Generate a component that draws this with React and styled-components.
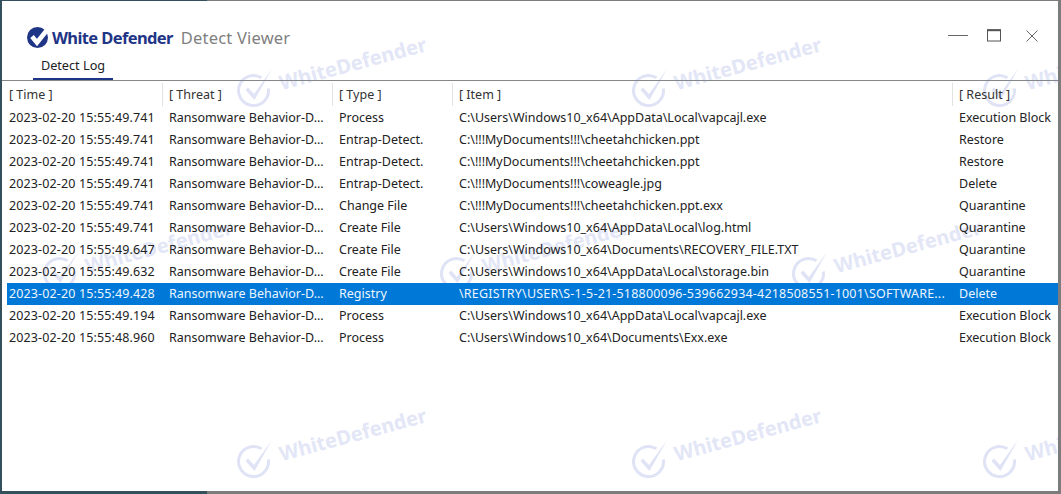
import React from 'react';
import styled, { createGlobalStyle } from 'styled-components';

const Global = createGlobalStyle`
  html, body { margin: 0; padding: 0; background: #fff; }
  #root { width: 1061px; height: 494px; overflow: hidden; }
`;

const COLS = '155px 170px 120px 500px 105px';
const FONT = '"Noto Sans", "Noto Sans CJK KR", sans-serif';

const Frame = styled.div`
  box-sizing: border-box;
  position: relative;
  width: 1061px;
  height: 494px;
  background: #fff;
  overflow: hidden;
  border-style: solid;
  border-width: 1px 3px 3px 2px;
  border-image: linear-gradient(to right, #34505c 207px, #7c7c7c 207px) 1;
  font-family: ${FONT};
  color: #222;
`;

const Content = styled.div`
  position: relative;
  display: flex;
  flex-direction: column;
  height: 100%;
`;

const TitleBar = styled.header`
  display: flex;
  align-items: center;
  height: 49px;
  padding: 1px 0 0 24px;
  box-sizing: border-box;
`;

const Brand = styled.div`
  display: flex;
  align-items: center;
  gap: 1px;
  margin-top: 22px;
`;

const BrandName = styled.span`
  font-size: 16.5px;
  font-weight: 700;
  letter-spacing: -0.62px;
  color: #1f3586;
`;

const AppName = styled.span`
  margin-left: 8px;
  margin-top: 22px;
  font-size: 16.5px;
  letter-spacing: 0.2px;
  color: #808080;
`;

const WindowButtons = styled.div`
  margin-left: auto;
  margin-top: 19px;
  display: flex;
  align-items: center;
  gap: 19px;
  padding-right: 20px;
  svg:last-child { margin-left: 6px; }
`;

const TabBar = styled.nav`
  display: flex;
  height: 30px;
  padding-left: 31px;
  border-bottom: 1px solid #85888b;
  box-sizing: content-box;
`;

const Tab = styled.div`
  box-sizing: border-box;
  width: 80px;
  height: 30px;
  border-bottom: 2px solid #1f3586;
  font-size: 12.7px;
  line-height: 30px;
  text-align: center;
  color: #222;
`;

const Table = styled.section`
  display: flex;
  flex-direction: column;
  padding-left: 5px;
`;

const HeaderRow = styled.div`
  display: grid;
  grid-template-columns: ${COLS};
  height: 26px;
  padding: 2px 0 1px;
  box-sizing: border-box;
`;

const HeaderCell = styled.div`
  font-size: 12.5px;
  line-height: 23px;
  padding-left: ${p => (p.$first ? '2px' : '6px')};
  border-left: ${p => (p.$first ? 'none' : '1px solid #e2e2e2')};
  color: #333;
`;

const Row = styled.div`
  display: grid;
  grid-template-columns: ${COLS};
  height: 22px;
  background: ${p => (p.$selected ? '#0078d7' : 'transparent')};
  color: ${p => (p.$selected ? '#eef6ff' : '#222')};
`;

const Cell = styled.div`
  font-size: 12.5px;
  line-height: 22px;
  padding-left: ${p => (p.$first ? '2px' : '7px')};
  letter-spacing: ${p => p.$track || 0}px;
  white-space: nowrap;
  overflow: hidden;
`;

const WatermarkItem = styled.div`
  position: absolute;
  left: ${p => p.$x}px;
  top: ${p => p.$y}px;
  width: 200px;
  height: 60px;
  pointer-events: none;
  svg { overflow: visible; }
`;

const WatermarkText = styled.span`
  position: absolute;
  left: 46px;
  top: -1px;
  font-size: 20px;
  font-weight: 700;
  line-height: 26px;
  color: #e3e6f6;
  white-space: nowrap;
  transform-origin: 0 100%;
  transform: rotate(-15deg);
`;

const Watermark = ({ x, y }) => (
  <WatermarkItem $x={x} $y={y}>
    <svg width="38" height="40" viewBox="2 1 38 40">
      <path d="M26.5 7.8A15 15 0 1 0 33.4 18.5" fill="none" stroke="#dfe3f5" strokeWidth="3" />
      <path d="M10.5 20L13 17.5L19 24L37-1L19.5 30Z" fill="#dfe3f5" />
    </svg>
    <WatermarkText>WhiteDefender</WatermarkText>
  </WatermarkItem>
);

const BrandLogo = () => (
  <svg width="25" height="22" viewBox="0 0 25 22">
    <circle cx="11.5" cy="11.5" r="10.5" fill="#1f3586" />
    <path d="M6 10.5l5 6L23 1.5" fill="none" stroke="#fff" strokeWidth="4.6" />
  </svg>
);

const MinIcon = () => (
  <svg width="20" height="14" viewBox="0 0 20 14"><path d="M0 6.5h20" stroke="#666" /></svg>
);
const MaxIcon = () => (
  <svg width="14" height="13" viewBox="0 0 14 13" fill="none" stroke="#555">
    <rect x=".5" y="1" width="13" height="11" />
    <path d="M0 1.2h14" strokeWidth="2" />
  </svg>
);
const CloseIcon = () => (
  <svg width="12" height="12" viewBox="0 0 12 12"><path d="M.5.5l11 11M11.5.5l-11 11" stroke="#666" fill="none" /></svg>
);

const THREAT = 'Ransomware Behavior-D...';
const USER = 'C:\\Users\\Windows10_x64\\';
const MYDOCS = 'C:\\!!!MyDocuments!!!\\';
const rows = [
  ['2023-02-20 15:55:49.741', 'Process', USER + 'AppData\\Local\\vapcajl.exe', 'Execution Block'],
  ['2023-02-20 15:55:49.741', 'Entrap-Detect.', MYDOCS + 'cheetahchicken.ppt', 'Restore'],
  ['2023-02-20 15:55:49.741', 'Entrap-Detect.', MYDOCS + 'cheetahchicken.ppt', 'Restore'],
  ['2023-02-20 15:55:49.741', 'Entrap-Detect.', MYDOCS + 'coweagle.jpg', 'Delete'],
  ['2023-02-20 15:55:49.741', 'Change File', MYDOCS + 'cheetahchicken.ppt.exx', 'Quarantine'],
  ['2023-02-20 15:55:49.741', 'Create File', USER + 'AppData\\Local\\log.html', 'Quarantine'],
  ['2023-02-20 15:55:49.647', 'Create File', USER + 'Documents\\RECOVERY_FILE.TXT', 'Quarantine'],
  ['2023-02-20 15:55:49.632', 'Create File', USER + 'AppData\\Local\\storage.bin', 'Quarantine'],
  ['2023-02-20 15:55:49.428', 'Registry', '\\REGISTRY\\USER\\S-1-5-21-518800096-539662934-4218508551-1001\\SOFTWARE...', 'Delete', true],
  ['2023-02-20 15:55:49.194', 'Process', USER + 'AppData\\Local\\vapcajl.exe', 'Execution Block'],
  ['2023-02-20 15:55:48.960', 'Process', USER + 'Documents\\Exx.exe', 'Execution Block'],
];

const marks = [
  [235, 70], [630, 70], [981, 70],
  [41, 253], [438, 253], [790, 253],
  [235, 441], [630, 441], [981, 441],
];

export default function App() {
  return (
    <Frame>
      <Global />
      {marks.map(([x, y]) => <Watermark key={`${x}-${y}`} x={x} y={y} />)}
      <Content>
        <TitleBar>
          <Brand>
            <BrandLogo />
            <BrandName>White Defender</BrandName>
          </Brand>
          <AppName>Detect Viewer</AppName>
          <WindowButtons>
            <MinIcon />
            <MaxIcon />
            <CloseIcon />
          </WindowButtons>
        </TitleBar>
        <TabBar>
          <Tab>Detect Log</Tab>
        </TabBar>
        <Table>
          <HeaderRow>
            <HeaderCell $first>[ Time ]</HeaderCell>
            <HeaderCell>[ Threat ]</HeaderCell>
            <HeaderCell>[ Type ]</HeaderCell>
            <HeaderCell>[ Item ]</HeaderCell>
            <HeaderCell>[ Result ]</HeaderCell>
          </HeaderRow>
          {rows.map(([time, type, item, result, selected], i) => (
            <Row key={i} $selected={selected}>
              <Cell $first $track={0.13}>{time}</Cell>
              <Cell>{THREAT}</Cell>
              <Cell>{type}</Cell>
              <Cell $track={selected ? 0.19 : 0}>{item}</Cell>
              <Cell>{result}</Cell>
            </Row>
          ))}
        </Table>
      </Content>
    </Frame>
  );
}
